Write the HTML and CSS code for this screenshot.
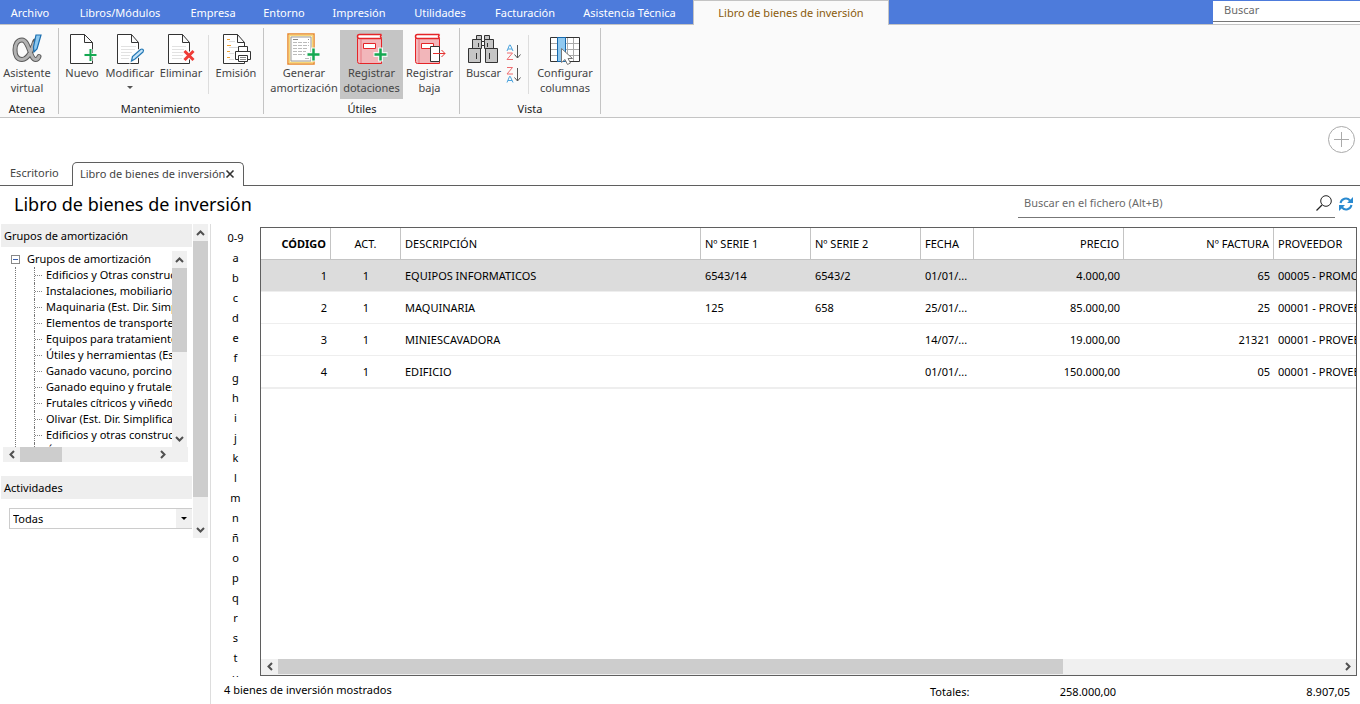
FILE: index.html
```html
<!DOCTYPE html>
<html lang="es">
<head>
<meta charset="utf-8">
<title>Libro de bienes de inversión</title>
<link rel="stylesheet" href="styles.css">
</head>
<body>
<header class="menubar">
  <nav class="menu">
    <a href="#">Archivo</a>
    <a href="#">Libros/Módulos</a>
    <a href="#">Empresa</a>
    <a href="#">Entorno</a>
    <a href="#">Impresión</a>
    <a href="#">Utilidades</a>
    <a href="#">Facturación</a>
    <a href="#">Asistencia Técnica</a>
    <a href="#" class="current">Libro de bienes de inversión</a>
  </nav>
  <div class="global-search"><input type="text" placeholder="Buscar" aria-label="Buscar"></div>
</header>

<section class="ribbon">
  <div class="group atenea">
    <div class="tools">
      <button class="tool">
        <svg width="32" height="32" viewBox="0 0 32 32"><g fill="none" stroke-linecap="round"><path d="M24 8C22 14 18 26.500 11 26.500C6 26.500 4 22 4 17C4 11 6.500 7 11 7C18 7 19 26.500 24.500 26.500C26.500 26.500 27.500 25 28 23.500" stroke="#5a5a5a" stroke-width="5"/><path d="M23 10C21 16 18 26.500 11 26.500C6 26.500 4 22 4 17C4 11 6.500 7 11 7C18 7 19 26.500 24.500 26.500C26.500 26.500 27.500 25 28 23.500" stroke="#b2b2b2" stroke-width="3"/></g><path d="M25 2h5l-4 14-3 3-.5-5z" fill="#8cc8f0" stroke="#1b6fb0" stroke-width="1.200"/></svg>
        <span>Asistente<br>virtual</span>
      </button>
    </div>
    <h2>Atenea</h2>
  </div>
  <div class="group mantenimiento">
    <div class="tools">
      <button class="tool">
        <svg width="32" height="32" viewBox="0 0 32 32"><path d="M4.500 1.500h14l8 8v21h-22zM18.500 1.500v8h8" fill="#fff" stroke="#333"/><path d="M24.500 16v12M18.500 22h12" stroke="#fafafa" stroke-width="4"/><path d="M24.500 16v12M18.500 22h12" stroke="#15a851" stroke-width="2"/></svg>
        <span>Nuevo</span>
      </button>
      <button class="tool">
        <svg width="32" height="32" viewBox="1 0 32 32"><path d="M4.500 1.500h14l7 8v21h-21zM18.500 1.500v8h7" fill="#fff" stroke="#333"/><path d="M8 13.500h15M8 16.500h14M8 19.500h11M8 22.500h9M8 25.500h8" stroke="#e2e2e2"/><path d="M18.500 28l1-4.500 8-7q1.500-1 2.500 0t0 2.500l-8 7z" fill="#9ed0f5" stroke="#fafafa" stroke-width="3"/><path d="M18.500 28l1-4.500 8-7q1.500-1 2.500 0t0 2.500l-8 7z" fill="#c5e3f8" stroke="#2478b5" stroke-width="1.200"/></svg>
        <span>Modificar</span>
        <i class="caret"></i>
      </button>
      <button class="tool">
        <svg width="32" height="32" viewBox="1 0 32 32"><path d="M4.500 1.500h14l7 8v21h-21zM18.500 1.500v8h7" fill="#fff" stroke="#333"/><path d="M8 13.500h14M8 16.500h12M8 19.500h11M8 22.500h11M8 25.500h10" stroke="#e2e2e2"/><path d="M20.500 18l9 9M29.500 18l-9 9" stroke="#fafafa" stroke-width="5"/><path d="M20.500 18l9 9M29.500 18l-9 9" stroke="#ef3b36" stroke-width="3"/></svg>
        <span>Eliminar</span>
      </button>
      <i class="rule"></i>
      <button class="tool">
        <svg width="32" height="32" viewBox="0 0 32 32"><path d="M3.500 1.500h14l7 8v21h-21zM17.500 1.500v8h7" fill="#fff" stroke="#333"/><path d="M7 6.500h3M7 12.500h4M7 18.500h3M7 24.500h3" stroke="#f0a030"/><path d="M9 8.500h6M9 14.500h10M9 20.500h5M9 26.500h5" stroke="#ddd"/><path d="M18.500 19v-5.500h9V19M18 26.500h-2.500v-8h15v8H28" fill="#fff" stroke="#333"/><path d="M18.500 22.500h9v6h-9z" fill="#fff" stroke="#333"/><path d="M20 24.500h6M20 26.500h6" stroke="#888"/></svg>
        <span>Emisión</span>
      </button>
    </div>
    <h2>Mantenimiento</h2>
  </div>
  <div class="group utiles">
    <div class="tools">
      <button class="tool">
        <svg width="32" height="32" viewBox="1 0 32 32"><path d="M1 1h26v30H1z" fill="#fff" stroke="#e8872c" stroke-width="1.500"/><path d="M2.500 2.500h23v27h-23z" fill="none" stroke="#f7d778" stroke-width="1.500"/><path d="M4 4h20v24H4z" fill="none" stroke="#999"/><path d="M6 6.500h5M21 6.500h1" stroke="#888"/><path d="M6 9.500h16M6 12.500h16M6 15.500h14M6 18.500h13M6 21.500h12M18 25.500h5" stroke="#bbb" stroke-dasharray="4 1"/><path d="M26.500 14.500v14M19.500 21.500h14" stroke="#fafafa" stroke-width="5"/><path d="M26.500 15.500v12M20.500 21.500h12" stroke="#15a851" stroke-width="2.500"/></svg>
        <span>Generar<br>amortización</span>
      </button>
      <button class="tool active">
        <svg width="32" height="32" viewBox="1 0 32 32"><path d="M2.500 5.500h24v25h-22q-2 0-2-2z" fill="#f2b6ba" stroke="#e52528"/><path d="M26.500 1.500h-22q-2 0-2 2t2 2h22M26.500 1.500l-1 2 1 2" fill="#fff" stroke="#e52528" stroke-width="1.500"/><path d="M6 6v24" stroke="#e87880"/><path d="M8.500 10.500h12v5h-12z" fill="#fff" stroke="#e52528"/><path d="M25.500 14.500v14M18.500 21.500h14" stroke="#f5f5f5" stroke-width="5"/><path d="M25.500 15.500v12M19.500 21.500h12" stroke="#15a851" stroke-width="2.500"/></svg>
        <span>Registrar<br>dotaciones</span>
      </button>
      <button class="tool">
        <svg width="32" height="32" viewBox="1 0 32 32"><path d="M2.500 5.500h24v25h-22q-2 0-2-2z" fill="#f2b6ba" stroke="#e52528"/><path d="M26.500 1.500h-22q-2 0-2 2t2 2h22M26.500 1.500l-1 2 1 2" fill="#fff" stroke="#e52528" stroke-width="1.500"/><path d="M6 6v24" stroke="#e87880"/><path d="M8.500 10.500h12v5h-12z" fill="#fff" stroke="#e52528"/><path d="M17.500 13.500h9v15h-9z" fill="#fff" stroke="#333"/><path d="M20 20.500h12M28.500 17l3.500 3.500-3.500 3.500" fill="none" stroke="#e5302e"/></svg>
        <span>Registrar<br>baja</span>
      </button>
    </div>
    <h2>Útiles</h2>
  </div>
  <div class="group vista">
    <div class="tools">
      <button class="tool">
        <svg width="32" height="32" viewBox="1 0 32 32"><g fill="#c6c6c6" stroke="#333"><path d="M9.500 2.500h5v4h-5zM17.500 2.500h5v4h-5z"/><path d="M5.500 6.500h9v9h-9zM17.500 6.500h9v9h-9z"/><path d="M14.500 8.500h3v4h-3z" fill="#fff"/><path d="M1.500 15.500h12v14h-12zM18.500 15.500h12v14h-12z"/></g><path d="M11.500 10v4M20.500 10v4M9.500 20v6M22.500 20v6" stroke="#333"/></svg>
        <span>Buscar</span>
      </button>
      <div class="sort">
        <button aria-label="Orden ascendente"><svg width="16" height="16" viewBox="0 0 16 16" fill="none"><path d="M1 7l2.500-6h.8L7 7M2 5h4" stroke="#4ba3dd"/><path d="M1 9h5.500L1 15.500h6" stroke="#ed6c70"/><path d="M11.500 1v13M8.500 10.500l3 3.500 3-3.500" stroke="#555"/></svg></button>
        <button aria-label="Orden descendente"><svg width="16" height="16" viewBox="0 0 16 16" fill="none"><path d="M1 .5h5.500L1 7h6" stroke="#ed6c70"/><path d="M1 15.500l2.500-6h.8L7 15.500M2 13.500h4" stroke="#4ba3dd"/><path d="M11.500 1v13M8.500 10.500l3 3.500 3-3.500" stroke="#555"/></svg></button>
      </div>
      <i class="rule"></i>
      <button class="tool">
        <svg width="32" height="32" viewBox="0 0 32 32"><path d="M1.500 4.500h29v24h-29z" fill="#fff"/><path d="M2 10.500h28M2 16.500h28M2 22.500h28M18.500 5v23M24.500 5v23" stroke="#aaa"/><path d="M1.500 4.500h29v24h-29z" fill="none" stroke="#333"/><path d="M8.500 4.500h8v24h-8z" fill="#90c9f0" stroke="#1769ad"/><path d="M12.500 15.500v14l3.500-3 2.500 5 3-1.500-2.500-4.500h4.500z" fill="#fff" stroke="#777"/></svg>
        <span>Configurar<br>columnas</span>
      </button>
    </div>
    <h2>Vista</h2>
  </div>
</section>

<div class="quick">
  <button aria-label="Añadir"><svg width="28" height="28" viewBox="0 0 28 28" fill="none" stroke="#aaa"><circle cx="14.500" cy="13.500" r="13"/><path d="M14.500 6v15M7 13.500h15"/></svg></button>
</div>

<nav class="doc-tabs">
  <a href="#" class="doc">Escritorio</a>
  <div class="doc open"><a href="#">Libro de bienes de inversión</a><button aria-label="Cerrar"><svg width="8" height="8" viewBox="0 0 8 8"><path d="M.5.500l7 7M7.500.500l-7 7" stroke="#333" stroke-width="1.600"/></svg></button></div>
  <div class="doc-fill"></div>
</nav>

<div class="title-row">
  <h1>Libro de bienes de inversión</h1>
  <div class="file-search">
    <input type="text" placeholder="Buscar en el fichero (Alt+B)" aria-label="Buscar en el fichero">
    <button aria-label="Buscar"><svg width="16" height="16" viewBox="0 0 16 16" fill="none" stroke="#222"><circle cx="10" cy="6" r="5.300"/><path d="M6 10L.5 15.500" stroke-width="1.200"/></svg></button>
  </div>
  <button aria-label="Actualizar"><svg width="14" height="14" viewBox="0 0 14 14" fill="none"><path d="M1.500 6A5.500 5.500 0 0 1 11 3.500M12.500 8A5.500 5.500 0 0 1 3 10.500" stroke="#2a8ad0" stroke-width="2"/><path d="M14 0v6H8zM0 14V8h6z" fill="#2a8ad0"/></svg></button>
</div>

<main class="work">
  <aside class="side">
    <div class="side-body">
      <h3>Grupos de amortización</h3>
      <div class="tree-box">
        <div class="tree">
          <div class="root"><button class="toggle" aria-label="Contraer"></button><span>Grupos de amortización</span></div>
          <ul>
            <li>Edificios y Otras construcciones</li>
            <li>Instalaciones, mobiliario</li>
            <li>Maquinaria (Est. Dir. Simplificada)</li>
            <li>Elementos de transporte</li>
            <li>Equipos para tratamiento</li>
            <li>Útiles y herramientas (Est. Dir.)</li>
            <li>Ganado vacuno, porcino</li>
            <li>Ganado equino y frutales</li>
            <li>Frutales cítricos y viñedos</li>
            <li>Olivar (Est. Dir. Simplificada)</li>
            <li>Edificios y otras construcciones</li>
            <li>Útiles y herramientas</li>
          </ul>
        </div>
        <div class="vbar tree-v">
          <button aria-label="Subir"><svg width="9" height="6" viewBox="0 0 9 6"><path d="M1 5l3.500-3.500L8 5" fill="none" stroke="#505050" stroke-width="2"/></svg></button>
          <div class="thumb"></div>
          <button class="end" aria-label="Bajar"><svg width="9" height="6" viewBox="0 0 9 6"><path d="M1 1l3.500 3.500L8 1" fill="none" stroke="#505050" stroke-width="2"/></svg></button>
        </div>
        <div class="hbar tree-h">
          <button aria-label="Izquierda"><svg width="6" height="9" viewBox="0 0 6 9"><path d="M5 1L1.500 4.500 5 8" fill="none" stroke="#505050" stroke-width="2"/></svg></button>
          <div class="thumb"></div>
          <button class="end" aria-label="Derecha"><svg width="6" height="9" viewBox="0 0 6 9"><path d="M1 1l3.500 3.500L1 8" fill="none" stroke="#505050" stroke-width="2"/></svg></button>
        </div>
      </div>
      <h3><label for="actividad">Actividades</label></h3>
      <div class="combo">
        <select id="actividad"><option>Todas</option></select>
        <span class="drop"><i class="caret dark"></i></span>
      </div>
    </div>
    <div class="vbar side-v">
      <button aria-label="Subir"><svg width="9" height="6" viewBox="0 0 9 6"><path d="M1 5l3.500-3.500L8 5" fill="none" stroke="#505050" stroke-width="2"/></svg></button>
      <div class="thumb"></div>
      <button class="end" aria-label="Bajar"><svg width="9" height="6" viewBox="0 0 9 6"><path d="M1 1l3.500 3.500L8 1" fill="none" stroke="#505050" stroke-width="2"/></svg></button>
    </div>
  </aside>

  <section class="content">
    <nav class="letters">
      <a href="#">0-9</a><a href="#">a</a><a href="#">b</a><a href="#">c</a><a href="#">d</a><a href="#">e</a><a href="#">f</a><a href="#">g</a><a href="#">h</a><a href="#">i</a><a href="#">j</a><a href="#">k</a><a href="#">l</a><a href="#">m</a><a href="#">n</a><a href="#">ñ</a><a href="#">o</a><a href="#">p</a><a href="#">q</a><a href="#">r</a><a href="#">s</a><a href="#">t</a><a href="#">u</a>
    </nav>
    <div class="grid">
      <div class="grid-view">
        <table>
          <colgroup><col class="c70"><col class="c70"><col class="c300"><col class="c110"><col class="c110"><col class="c53"><col class="c150"><col class="c150"><col class="c300"></colgroup>
          <thead>
            <tr><th class="num sorted">CÓDIGO</th><th class="mid">ACT.</th><th>DESCRIPCIÓN</th><th>Nº SERIE 1</th><th>Nº SERIE 2</th><th>FECHA</th><th class="num">PRECIO</th><th class="num">Nº FACTURA</th><th>PROVEEDOR</th></tr>
          </thead>
          <tbody>
            <tr class="selected"><td class="num">1</td><td class="mid">1</td><td>EQUIPOS INFORMATICOS</td><td>6543/14</td><td>6543/2</td><td>01/01/...</td><td class="num">4.000,00</td><td class="num">65</td><td>00005 - PROMOCIONES</td></tr>
            <tr><td class="num">2</td><td class="mid">1</td><td>MAQUINARIA</td><td>125</td><td>658</td><td>25/01/...</td><td class="num">85.000,00</td><td class="num">25</td><td>00001 - PROVEEDOR</td></tr>
            <tr><td class="num">3</td><td class="mid">1</td><td>MINIESCAVADORA</td><td></td><td></td><td>14/07/...</td><td class="num">19.000,00</td><td class="num">21321</td><td>00001 - PROVEEDOR</td></tr>
            <tr><td class="num">4</td><td class="mid">1</td><td>EDIFICIO</td><td></td><td></td><td>01/01/...</td><td class="num">150.000,00</td><td class="num">05</td><td>00001 - PROVEEDOR</td></tr>
          </tbody>
        </table>
      </div>
      <div class="hbar grid-h">
        <button aria-label="Izquierda"><svg width="6" height="9" viewBox="0 0 6 9"><path d="M5 1L1.500 4.500 5 8" fill="none" stroke="#505050" stroke-width="2"/></svg></button>
        <div class="track"><div class="thumb"></div></div>
        <button class="end" aria-label="Derecha"><svg width="6" height="9" viewBox="0 0 6 9"><path d="M1 1l3.500 3.500L1 8" fill="none" stroke="#505050" stroke-width="2"/></svg></button>
      </div>
    </div>
    <footer class="status">
      <span class="count">4 bienes de inversión mostrados</span>
      <span class="total-label">Totales:</span>
      <span class="total">258.000,00</span>
      <span class="total">8.907,05</span>
    </footer>
  </section>
</main>
</body>
</html>
```

FILE: styles.css
```css
* { box-sizing: border-box; }
body {
  margin: 0;
  height: 100vh;
  display: flex;
  flex-direction: column;
  overflow: hidden;
  background: #fff;
  color: #000;
  font: 11px/16px "Noto Sans", "Open Sans", sans-serif;
}
a { color: inherit; text-decoration: none; }
button { border: 0; padding: 0; background: none; font: inherit; color: inherit; display: flex; align-items: center; justify-content: center; }
input, select { font: inherit; border: 0; padding: 0; margin: 0; outline: 0; background: #fff; }
input::placeholder { color: #6a6a6a; opacity: 1; }
h1, h2, h3 { margin: 0; font-weight: 400; }
svg { display: block; flex: none; overflow: visible; }

/* Menu bar */
.menubar { flex: none; height: 25px; display: flex; justify-content: space-between; background: #4d7bdb; border-bottom: 1px solid #c4c4c4; }
.menu { display: grid; grid-template-columns: 60px 120px 66px 76px 74px 88px 82px 127px 196px; color: #fff; }
.menu a { display: flex; align-items: center; justify-content: center; height: 25px; white-space: nowrap; }
.menu .current { background: #fafafa; color: #8a5a0c; border: 1px solid #c4c4c4; border-bottom: 0; }
.global-search { width: 147px; margin-top: 1px; background: #fff; }
.global-search input { width: 100%; height: 21px; padding: 0 11px 3px; border-bottom: 1px solid #777; }

/* Ribbon */
.ribbon { flex: none; display: flex; height: 93px; padding-top: 3px; background: #fafafa; border-bottom: 1px solid #c4c4c4; color: #444; }
.group { height: 86px; padding: 2px 3px 0; border-right: 1px solid #c4c4c4; display: flex; flex-direction: column; justify-content: space-between; }
.group h2 { font-size: 11px; line-height: 16px; margin-bottom: -3px; text-align: center; color: #222; }
.tools { display: grid; height: 69px; }
.atenea { width: 59px; padding-left: 0; padding-right: 4px; }
.mantenimiento { width: 205px; padding-left: 2px; }
.mantenimiento .tools { grid-template-columns: 42px 54px 48px 8px 46px; }
.utiles { width: 196px; padding-left: 4px; }
.utiles .tools { grid-template-columns: 72px 63px 53px; }
.vista { width: 141px; }
.vista .tools { grid-template-columns: 41px 21px 8px 64px; }
.tool { flex-direction: column; justify-content: flex-start; height: 69px; padding-top: 3px; line-height: 15px; white-space: nowrap; }
.tool.active { background: #c5c5c5; }
.caret { width: 0; height: 0; margin-top: 6px; border: 3px solid transparent; border-top-color: #555; border-bottom: 0; }
.caret.dark { margin: 0; border-top-color: #000; }
.rule { width: 1px; height: 59px; margin: 5px 4px 0 3px; background: #ddd; }
.sort { display: flex; flex-direction: column; gap: 7px; padding: 14px 0 0 2px; }
.sort button { width: 16px; height: 16px; }

/* Document tabs */
.quick { flex: none; height: 44px; display: flex; justify-content: flex-end; align-items: center; padding-right: 5px; }
.doc-tabs { flex: none; display: flex; height: 24px; color: #444; }
.doc { width: 72px; padding-left: 10px; line-height: 22px; border-bottom: 1px solid #5f5f5f; white-space: nowrap; }
.doc.open { width: 172px; display: flex; align-items: center; justify-content: space-between; padding: 0 9px 2px 7px; border: 1px solid #5f5f5f; border-bottom: 0; border-radius: 5px 5px 0 0; }
.doc-fill { flex: 1; border-bottom: 1px solid #5f5f5f; }

/* Title and search */
.title-row { flex: none; display: flex; align-items: center; height: 38px; padding: 0 7px 3px 14px; }
.title-row h1 { flex: 1; font-size: 18px; line-height: 28px; }
.file-search { display: flex; align-items: center; width: 317px; height: 28px; margin-right: 4px; padding: 0 3px 0 6px; border-bottom: 1px solid #777; }
.file-search input { flex: 1; }

/* Work area */
.work { flex: 1; min-height: 0; display: flex; }
.side { flex: none; width: 211px; display: flex; align-items: flex-start; border-right: 1px solid #ddd; }
.side-body { width: 193px; padding: 0 1px; }
.side h3 { height: 23px; padding-left: 3px; background: #eee; font-size: 11px; line-height: 23px; }
.vbar, .hbar { display: flex; background: #f0f0f0; }
.vbar { flex-direction: column; width: 15px; }
.hbar { height: 15px; }
.vbar button { height: 17px; flex: none; }
.hbar button { width: 17px; flex: none; }
.vbar .end { margin-top: auto; }
.hbar .end { margin-left: auto; }
.thumb { background: #cdcdcd; }
.side-v { height: 314px; }
.side-v .thumb { height: 256px; }
.tree-box { display: grid; grid-template: 196px 15px / 169px 16px; margin: 4px 0 14px 2px; }
.tree { overflow: hidden; white-space: nowrap; }
.root { display: flex; align-items: center; height: 16px; padding-left: 8px; gap: 7px; }
.toggle { width: 9px; height: 9px; border: 1px solid #888; background: linear-gradient(#3a5fae, #3a5fae) center / 5px 1px no-repeat, #fff; }
.tree ul { margin: 0 0 0 12px; padding: 0 0 0 18px; border-left: 1px dotted #777; list-style: none; }
.tree li { height: 16px; padding-left: 11px; border-left: 1px dotted #777; background: repeating-linear-gradient(90deg, #888 0 1px, transparent 1px 2px) 0 8px / 8px 1px no-repeat; }
.tree-v { width: 15px; }
.tree-v .thumb { height: 84px; }
.tree-h { grid-column: 1 / 3; }
.tree-h .thumb { width: 42px; }
.tree-h .end { margin-right: 17px; }
.combo { display: grid; margin: 9px 0 0 8px; height: 21px; border: 1px solid #ccc; border-right: 0; }
.combo select { grid-area: 1 / 1; appearance: none; padding-left: 3px; color: #000; }
.combo .drop { grid-area: 1 / 1; justify-self: end; width: 16px; display: flex; align-items: center; justify-content: center; background: #f0f0f0; pointer-events: none; }

/* Content */
.content { flex: 1; min-width: 0; display: grid; grid-template: 1fr 28px / 49px minmax(0, 1fr); padding: 3px 3px 0 0; }
.letters { margin-top: 1px; margin-bottom: -3px; height: 0; min-height: 100%; overflow: hidden; display: flex; flex-direction: column; }
.letters a { flex: none; height: 20px; line-height: 20px; text-align: center; }
.grid { display: flex; flex-direction: column; min-height: 0; border: 1px solid #5f5f5f; }
.grid-view { flex: 1; min-height: 0; overflow: hidden; }
.grid-h { flex: none; height: 16px; padding-bottom: 1px; }
.track { flex: 1; display: flex; }
.grid-h .thumb { width: 74%; }
table { table-layout: fixed; width: 1313px; border-collapse: separate; border-spacing: 0; border-bottom: 1px solid #eee; }
.c53 { width: 53px; }
.c70 { width: 70px; }
.c110 { width: 110px; }
.c150 { width: 150px; }
.c300 { width: 300px; }
th, td { height: 32px; padding: 0 4px; font-weight: 400; text-align: left; white-space: nowrap; overflow: hidden; }
th { border-right: 1px solid #c4c4c4; border-bottom: 1px solid #c4c4c4; }
td { border-bottom: 1px solid #eee; }
.sorted { font-weight: 700; }
.num { text-align: right; }
.mid { text-align: center; }
.selected td { background: #dcdcdc; }

.status { grid-column: 1 / 3; display: flex; align-items: center; padding: 4px 7px 0 13px; }
.count { flex: 1; margin-bottom: 4px; }
.total-label { width: 39px; }
.total { width: 147px; text-align: right; }
.total + .total { width: 234px; }
```
